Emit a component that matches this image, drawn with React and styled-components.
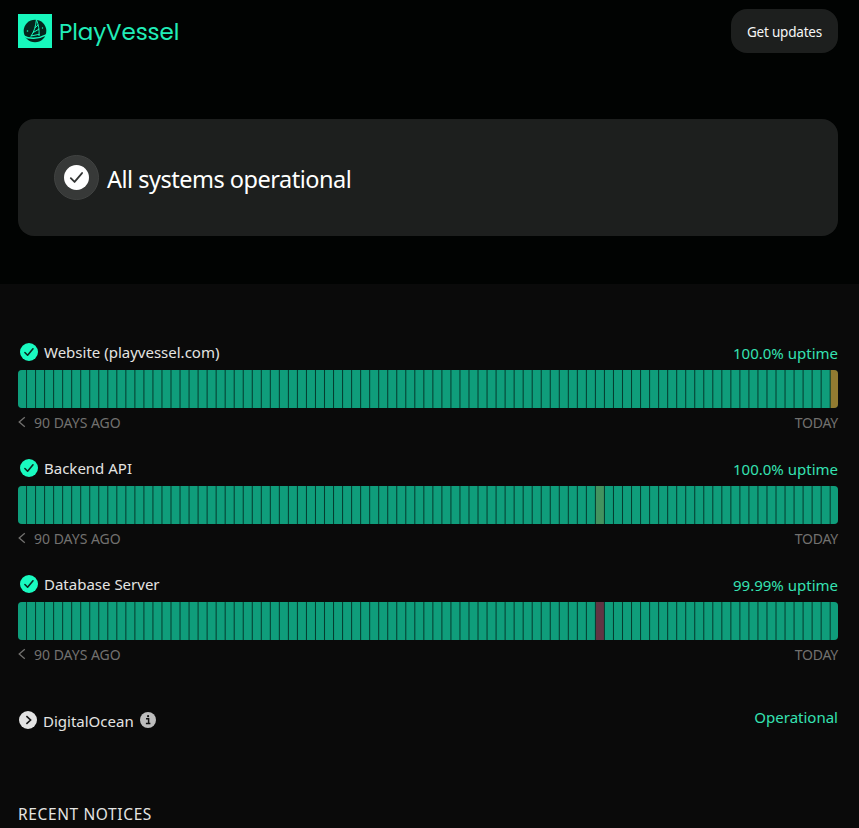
import React from "react";
import styled, { createGlobalStyle } from "styled-components";

const Global = createGlobalStyle`
  *, *::before, *::after { box-sizing: border-box; }
  body { margin: 0; background: #0a0a0a; font-family: "Noto Sans", "Open Sans", sans-serif; overflow: hidden; }
`;

const Page = styled.div`
  height: 828px;
  overflow: hidden;
  background: #0a0a0a;
  color: #e4e4e2;
`;

const Hero = styled.header`
  height: 284px;
  padding: 9px 21px 0 18px;
  background: #010302;
`;

const TopBar = styled.div`
  display: flex;
  justify-content: space-between;
  align-items: flex-start;
  height: 110px;
`;

const Brand = styled.div`
  display: flex;
  align-items: center;
  gap: 7px;
  height: 44px;
  svg { display: block; }
`;

const Label = styled.span`
  display: block;
  white-space: nowrap;
  font-size: ${(p) => p.$size}px;
  line-height: ${(p) => p.$line || 22}px;
  letter-spacing: ${(p) => p.$track || 0}px;
  color: ${(p) => p.$color || "inherit"};
`;

const BrandName = styled(Label)`
  font-family: "Poppins", "Lato", sans-serif;
  padding-top: 2px;
`;

const UpdatesButton = styled.button`
  width: 107px;
  height: 44px;
  padding: 2px 0 0;
  border: 0;
  border-radius: 16px;
  background: #1d1f1e;
  color: #f6f6f6;
  font-family: inherit;
  display: flex;
  align-items: center;
  justify-content: center;
`;

const StatusCard = styled.section`
  display: flex;
  align-items: center;
  gap: 8px;
  height: 117px;
  padding: 0 36px;
  border-radius: 16px;
  background: #1d1f1e;
  color: #fff;
`;

const StatusText = styled(Label)`
  padding-top: 3px;
`;

const Halo = styled.span`
  display: flex;
  align-items: center;
  justify-content: center;
  width: 45px;
  height: 45px;
  border: 1px solid #414342;
  border-radius: 50%;
  background: #373938;
`;

const Components = styled.main`
  padding: 57px 21px 0 18px;
`;

const Service = styled.section`
  height: 116px;
`;

const ServiceHead = styled.div`
  display: flex;
  align-items: center;
  justify-content: space-between;
  height: 29px;
  padding-bottom: 7px;
`;

const Uptime = styled(Label)`
  padding-top: 2px;
`;

const Name = styled.div`
  display: flex;
  align-items: center;
  gap: 6px;
  padding-left: ${(p) => p.$inset}px;
  svg { display: block; }
`;

const Timeline = styled.div`
  height: 38px;
  border-radius: 4px;
  overflow: hidden;
  svg { display: block; }
`;

const Range = styled.div`
  display: flex;
  align-items: center;
  justify-content: space-between;
  height: 30px;
  color: #72716f;
`;

const RangeStart = styled.div`
  display: flex;
  align-items: center;
  gap: 8px;
  svg { display: block; margin-bottom: 2px; }
`;

const Provider = styled.section`
  display: flex;
  align-items: flex-start;
  justify-content: space-between;
  height: 24px;
  margin-top: 17px;
`;

const ProviderName = styled(Name)`
  padding-top: 2px;
`;

const ProviderLabel = styled(Label)`
  padding-top: 2px;
  margin-bottom: -1px;
`;

const Notices = styled.h2`
  margin: 73px 0 0;
  font-weight: 400;
`;

const Logo = () => (
  <svg width="34" height="34" viewBox="0 0 34 34">
    <path d="M0 0h34v34H0z" fill="#17f8bd" />
    <circle cx="17" cy="17" r="11.3" fill="#04251d" />
    <g fill="none" stroke="#17f8bd" strokeWidth="1">
      <path d="M18.4 5.5C17.8 12 16.3 17.5 12.8 22.5M18.4 5.5C20.5 11 21.5 16 21 22M14.7 18.8L21.2 15M16.6 14.2L20.3 10.8" />
      <path d="M12.8 22L21.8 20.2" />
      <path d="M5.5 21.8C11 25.2 20 25.2 28.2 20.8" strokeWidth="1.4" />
    </g>
    <circle cx="9.5" cy="17" r=".8" fill="#17f8bd" />
    <circle cx="24.5" cy="14" r=".7" fill="#17f8bd" />
  </svg>
);

const Check = ({ size, fill, mark, weight = 1.6 }) => (
  <svg width={size} height={size} viewBox="0 0 18 18">
    <circle cx="9" cy="9" r="9" fill={fill} />
    <path d="M4.9 9.5L7.6 12.2L13 5.8" fill="none" stroke={mark} strokeWidth={weight} strokeLinecap="round" strokeLinejoin="round" />
  </svg>
);

const Bars = ({ special = {} }) => (
  <svg width="820" height="38">
    <rect width="820" height="38" fill="#053d30" />
    {Array.from({ length: 91 }, (_, i) => (
      <rect key={i} x={i * 9.03} width="8" height="38" fill={special[i] || "#0f9d7b"} />
    ))}
  </svg>
);

const services = [
  { name: "Website (playvessel.com)", uptime: "100.0% uptime", special: { 90: "#927b31" } },
  { name: "Backend API", uptime: "100.0% uptime", special: { 64: "#43935f" } },
  { name: "Database Server", uptime: "99.99% uptime", special: { 64: "#613443" } },
];

export default function App() {
  return (
    <Page>
      <Global />
      <Hero>
        <TopBar>
          <Brand>
            <Logo />
            <BrandName $size={23} $line={32} $track={-0.1} $color="#20edb8">PlayVessel</BrandName>
          </Brand>
          <UpdatesButton><Label $size={13.5} $track={-0.2}>Get updates</Label></UpdatesButton>
        </TopBar>
        <StatusCard>
          <Halo><Check size={25} fill="#fff" mark="#333534" weight={1.3} /></Halo>
          <StatusText $size={23.5} $line={32} $track={-0.5}>All systems operational</StatusText>
        </StatusCard>
      </Hero>
      <Components>
        {services.map((s) => (
          <Service key={s.name}>
            <ServiceHead>
              <Name $inset={2}>
                <Check size={18} fill="#19fac0" mark="#0a2a21" />
                <Label $size={15}>{s.name}</Label>
              </Name>
              <Uptime $size={15} $color="#35e2b2">{s.uptime}</Uptime>
            </ServiceHead>
            <Timeline><Bars special={s.special} /></Timeline>
            <Range>
              <RangeStart>
                <svg width="8" height="12" viewBox="0 0 8 12"><path d="M6.8 1.2L1.2 6L6.8 10.8" fill="none" stroke="currentColor" strokeWidth="1.3" /></svg>
                <Label $size={14}>90 DAYS AGO</Label>
              </RangeStart>
              <Label $size={14} $track={-0.25}>TODAY</Label>
            </Range>
          </Service>
        ))}
        <Provider>
          <ProviderName $inset={1}>
            <svg width="18" height="18" viewBox="0 0 18 18">
              <circle cx="9" cy="9" r="9" fill="#e4e4e4" />
              <path d="M7.4 5.1L11.6 9L7.4 12.9" fill="none" stroke="#161616" strokeWidth="1.6" />
            </svg>
            <ProviderLabel $size={15}>DigitalOcean</ProviderLabel>
            <svg width="16" height="16" viewBox="0 0 16 16">
              <circle cx="8" cy="8" r="8" fill="#bdbdbd" />
              <path d="M6 6.8H8.6V11.6M5.9 11.6H10.4" fill="none" stroke="#111" strokeWidth="1.5" />
              <circle cx="8.1" cy="4.2" r="1.1" fill="#111" />
            </svg>
          </ProviderName>
          <Label $size={15} $color="#35e2b2">Operational</Label>
        </Provider>
        <Notices><Label $size={15.5} $track={0.62}>RECENT NOTICES</Label></Notices>
      </Components>
    </Page>
  );
}
